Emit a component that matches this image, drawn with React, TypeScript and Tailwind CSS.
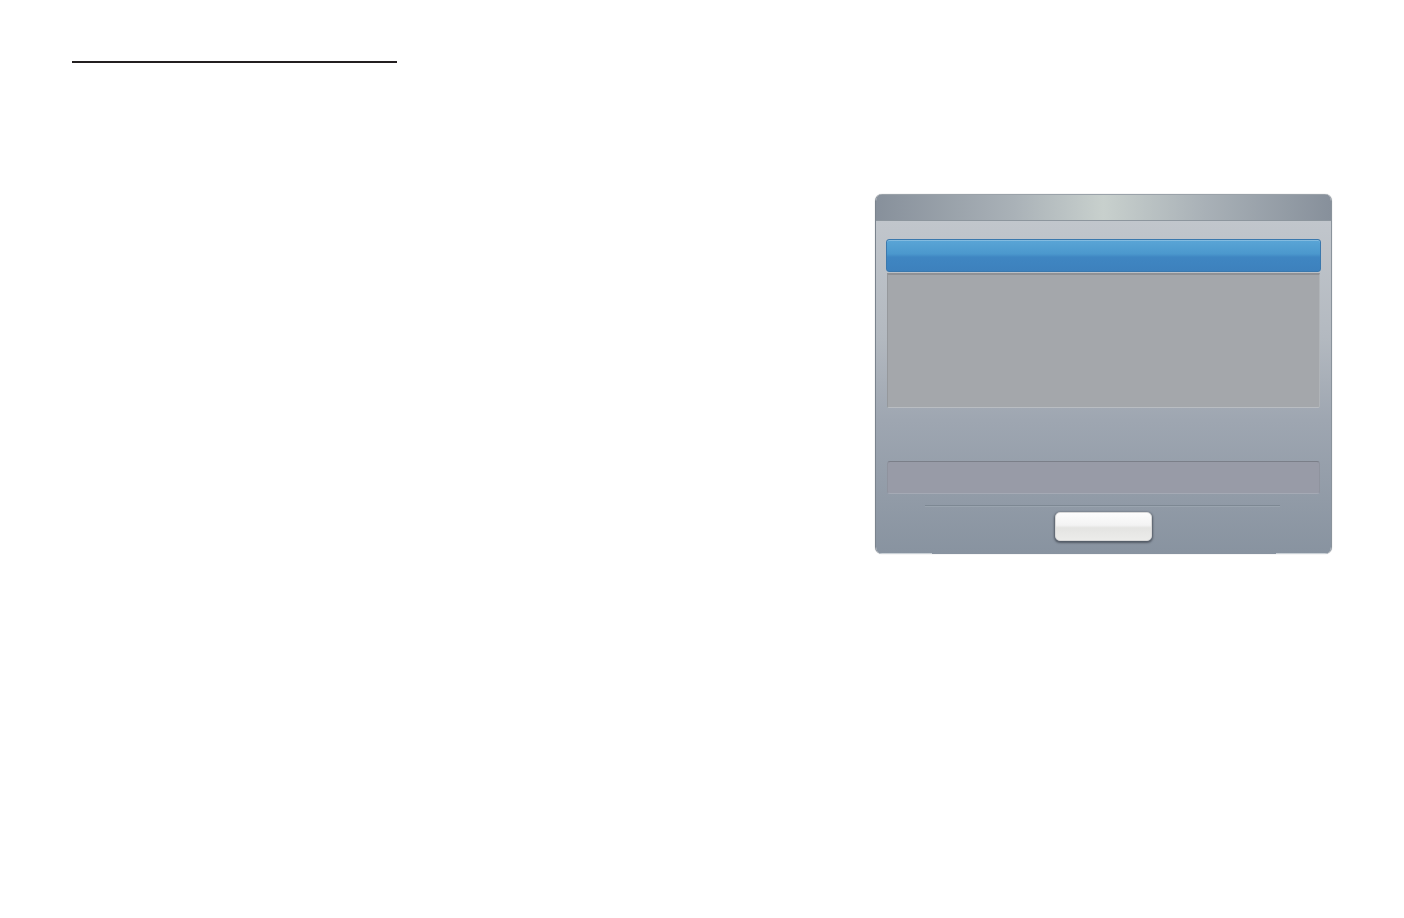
import React from "react";

export default function App() {
  return (
    <div className="w-[1404px] h-[918px] bg-white overflow-hidden flex flex-col" style={{ fontFamily: '"Liberation Sans", Arial, sans-serif' }}>
      <div className="mt-[61px] ml-[72px] w-[325px] h-[2px] bg-[#231f20]" />
      <div className="mt-[131px] ml-[875px] w-[457px] h-[360px] rounded-[7px] overflow-hidden flex flex-col border-l border-[#7a838d] border-r border-r-[#8a939c] shadow-[0_0_1px_rgba(0,0,0,0.35)]">
        <div className="h-[27px] shrink-0 bg-[linear-gradient(to_right,#87909b,#a9b1b7_30%,#c8d0cd_50%,#a9b1b7_72%,#87909b)] border-t border-[#9aa2a9] border-b border-b-[#8d969e]" />
        <div className="flex-1 flex flex-col px-[10px] bg-[linear-gradient(to_bottom,#c1c6cc,#b3b9c0_35%,#9ea6b1_60%,#8893a0)]">
          <div className="mt-[18px] h-[33px] rounded-[3px] border border-[#3a78ad] bg-[linear-gradient(to_bottom,#5aa5d6,#4b98cd_45%,#3f86c2_55%,#3d81bd)] shadow-[inset_0_1px_0_rgba(255,255,255,0.25)]" />
          <div className="mt-[1px] mx-[1px] h-[135px] bg-[#a4a7ab] border-t-2 border-[#8f9195] border-l border-l-[#95989c] border-b border-b-[#b9bdc2] border-r border-r-[#b0b4b8] rounded-b-[2px]" />
          <div className="mt-[53px] mx-[1px] h-[33px] rounded-[3px] bg-[#989ba7] border-t border-[#7b7f89] border-b border-b-[#a5aab5] border-x border-x-[#8f939e]" />
          <div className="mt-[11px] ml-[39px] mr-[41px] h-[2px] border-t border-[#7d8893] border-b border-b-[#9aa4af]" />
          <div className="mt-[5px] flex justify-center">
            <div className="w-[97px] h-[29px] rounded-[5px] bg-[linear-gradient(to_bottom,#fdfdfd,#f3f3f3_45%,#e4e4e2_55%,#ececea)] border border-[#d8d8d8] shadow-[0_1px_2px_1px_rgba(40,45,55,0.55)]" />
          </div>
          <div className="flex-1" />
          <div className="h-[1px] flex justify-between -mx-[10px]">
            <div className="w-[56px] h-[1px] bg-[#c9d0d6]" />
            <div className="w-[55px] h-[1px] bg-[#c9d0d6]" />
          </div>
        </div>
      </div>
    </div>
  );
}
